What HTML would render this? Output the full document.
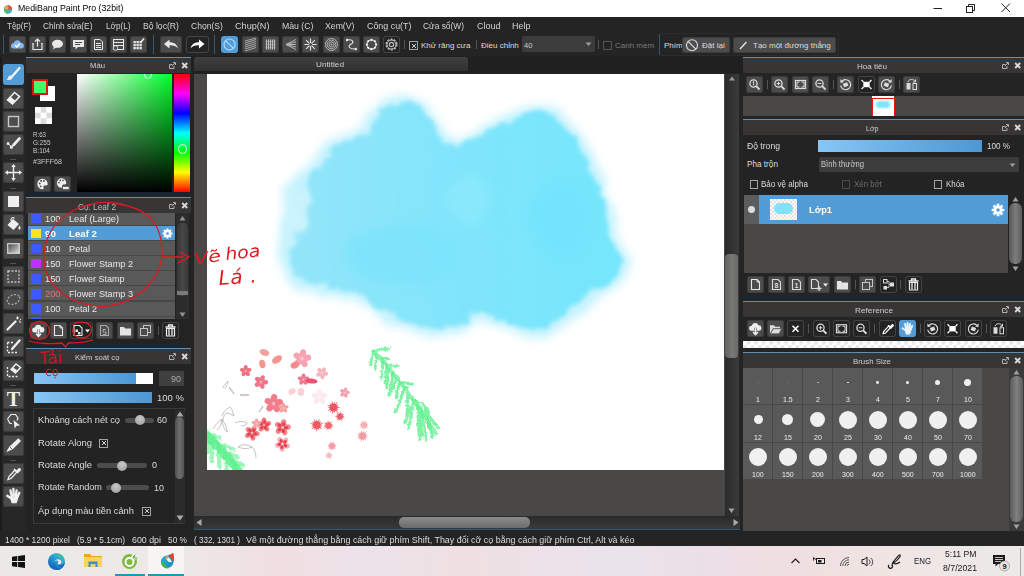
<!DOCTYPE html>
<html><head><meta charset="utf-8"><title>MediBang Paint Pro</title>
<style>
*{box-sizing:border-box;margin:0;padding:0}
html,body{width:1024px;height:576px;overflow:hidden;background:#242424;font-family:"Liberation Sans","DejaVu Sans",sans-serif;}
.a{position:absolute}
.t{position:absolute;white-space:nowrap;color:#ddd;font-size:8px;line-height:12px;transform-origin:0 50%}
.b{position:absolute;background:#4c4c4c;border-radius:3px;box-shadow:inset 0 0 0 1px #3c3c3c}
.b.dk{background:#232323;box-shadow:inset 0 0 0 1px #444}
.b.on{background:#529dd8;box-shadow:none}
.b svg,.tl svg{position:absolute;left:0;top:0;width:100%;height:100%;overflow:visible}
.tl{position:absolute;left:3px;width:21px;height:21px;background:#4c4c4c;border-radius:3px;box-shadow:inset 0 0 0 1px #3a3a3a}
.tl.on{background:#529dd8;box-shadow:none}
.sep{position:absolute;width:1px;height:9px;background:#555}
.pl{position:absolute;height:1px;background:#5f8fb2}
.ph{position:absolute;height:15px;background:#383535}
.cb{position:absolute;width:9px;height:9px;border:1px solid #a4a4a4}
.cb.x:before{content:"";position:absolute;left:1.500px;top:1.500px;width:4px;height:4px;background:linear-gradient(45deg,transparent 40%,#d4d4d4 40%,#d4d4d4 60%,transparent 60%),linear-gradient(-45deg,transparent 40%,#d4d4d4 40%,#d4d4d4 60%,transparent 60%)}
.trk{position:absolute;height:5px;border-radius:3px;background:#4c4c4c}
.knb{position:absolute;width:10px;height:10px;border-radius:5px;background:radial-gradient(circle at 50% 35%,#c8c8c8,#9a9a9a)}
.sl{position:absolute;background:linear-gradient(90deg,#86c6f4,#4c97d4)}
.cell{position:absolute;width:29px;height:36px;background:#595959}
.dot{position:absolute;background:#f0f0f0;border-radius:50%}
.row{position:absolute;left:28px;width:147px;height:14px;background:#595959}
</style></head><body>
<div class="a" style="left:0;top:0;width:1024px;height:17px;background:#fff"></div>
<svg class="a" style="left:3px;top:4px" width="10" height="10" viewBox="0 0 10 10"><circle cx="5" cy="5.5" r="4.2" fill="#3bb0c8"/><path d="M1 5.5a4 4 0 0 0 4 4.2V5.5z" fill="#4fbf5a"/><path d="M5 1.3a4.2 4.2 0 0 1 4.2 4.2H5z" fill="#e8503a"/><circle cx="3.5" cy="3.5" r="2" fill="#f2a33a"/></svg>
<span class="t " style="left:18px;top:2.1px;font-size:9.6px;color:#000;transform:scaleX(0.915);">MediBang Paint Pro (32bit)</span>
<svg class="a" style="left:900px;top:0" width="124" height="17" viewBox="0 0 124 17"><path d="M33.500 8.500h8.500" stroke="#222" stroke-width="1" fill="none"/><rect x="66.500" y="6.500" width="6" height="6" stroke="#222" fill="none"/><path d="M68.500 6.500v-2h6v6h-2" stroke="#222" fill="none"/><path d="M101.500 3.500l8.500 8.500M110 3.500l-8.500 8.500" stroke="#222" stroke-width="1" fill="none"/></svg>
<div class="a" style="left:0;top:17px;width:1024px;height:16px;background:#242424"></div>
<span class="t " style="left:6.5px;top:19.9px;font-size:9.2px;color:#d4d4d4;transform:scaleX(0.870);">Tệp(F)</span>
<span class="t " style="left:43px;top:19.9px;font-size:9.2px;color:#d4d4d4;transform:scaleX(0.904);">Chỉnh sửa(E)</span>
<span class="t " style="left:105.5px;top:19.9px;font-size:9.2px;color:#d4d4d4;transform:scaleX(0.891);">Lớp(L)</span>
<span class="t " style="left:142.5px;top:19.9px;font-size:9.2px;color:#d4d4d4;transform:scaleX(0.939);">Bộ lọc(R)</span>
<span class="t " style="left:190.5px;top:19.9px;font-size:9.2px;color:#d4d4d4;transform:scaleX(0.934);">Chọn(S)</span>
<span class="t " style="left:234.5px;top:19.9px;font-size:9.2px;color:#d4d4d4;transform:scaleX(0.992);">Chụp(N)</span>
<span class="t " style="left:281.5px;top:19.9px;font-size:9.2px;color:#d4d4d4;transform:scaleX(0.948);">Màu (C)</span>
<span class="t " style="left:325px;top:19.9px;font-size:9.2px;color:#d4d4d4;transform:scaleX(0.946);">Xem(V)</span>
<span class="t " style="left:366.5px;top:19.9px;font-size:9.2px;color:#d4d4d4;transform:scaleX(0.967);">Công cụ(T)</span>
<span class="t " style="left:423px;top:19.9px;font-size:9.2px;color:#d4d4d4;transform:scaleX(0.911);">Cửa sổ(W)</span>
<span class="t " style="left:476.5px;top:19.9px;font-size:9.2px;color:#d4d4d4;transform:scaleX(0.978);">Cloud</span>
<span class="t " style="left:512px;top:19.9px;font-size:9.2px;color:#d4d4d4;transform:scaleX(0.978);">Help</span>
<div class="a" style="left:0;top:33px;width:1024px;height:24px;background:#242424"></div>
<div class="a" style="left:3px;top:35px;width:1px;height:19px;background:#2f5a7a"></div>
<div class="b " style="left:9px;top:36px;width:17px;height:17px"><svg viewBox="0 0 17 17"><path d="M4.5 12.5a2.7 2.7 0 0 1 .3-5.4a3.6 3.6 0 0 1 6.9-.4a2.9 2.9 0 0 1 .6 5.8z" fill="#86b6f2"/><path d="M6 9.2l1.8 1.8l3.2-3.4" stroke="#fff" stroke-width="1.5" fill="none"/></svg></div>
<div class="b " style="left:29px;top:36px;width:17px;height:17px"><svg viewBox="0 0 17 17"><path d="M5 7.5h-1v6h9v-6h-1" stroke="#e8e8e8" fill="none" stroke-width="1.2"/><path d="M8.5 10.5v-7M6 5.5l2.5-2.5l2.5 2.5" stroke="#e8e8e8" fill="none" stroke-width="1.2"/></svg></div>
<div class="b " style="left:49px;top:36px;width:17px;height:17px"><svg viewBox="0 0 17 17"><ellipse cx="8.5" cy="7.8" rx="5.5" ry="4" fill="#e8e8e8"/><path d="M5 10l-1 3.5l4-2.5z" fill="#e8e8e8"/></svg></div>
<div class="b " style="left:70px;top:36px;width:17px;height:17px"><svg viewBox="0 0 17 17"><path d="M3 4h11v7h-6l-2.5 2.5v-2.5h-2.500z" fill="#e8e8e8"/><path d="M5 6.500h7M5 8.500h5" stroke="#4b4b4b" stroke-width="1"/></svg></div>
<div class="b " style="left:90px;top:36px;width:17px;height:17px"><svg viewBox="0 0 17 17"><path d="M4.500 3.500h5.500l2.500 2.500v7.500h-8z" stroke="#e8e8e8" fill="none"/><path d="M6 7.500h5M6 9.500h5M6 11.500h5" stroke="#e8e8e8" stroke-width="1"/></svg></div>
<div class="b " style="left:110px;top:36px;width:17px;height:17px"><svg viewBox="0 0 17 17"><rect x="3.500" y="3.500" width="10" height="10" stroke="#e8e8e8" fill="none"/><path d="M3.500 6.500h10M3.500 9.500h10" stroke="#e8e8e8"/><circle cx="5.500" cy="12" r="2.300" fill="#4b4b4b" stroke="#e8e8e8" stroke-width=".8"/></svg></div>
<div class="b " style="left:130px;top:36px;width:17px;height:17px"><svg viewBox="0 0 17 17"><g fill="#e8e8e8"><rect x="3.500" y="5" width="2.300" height="2.300"/><rect x="6.500" y="5" width="2.300" height="2.300"/><rect x="9.500" y="5" width="2.300" height="2.300"/><rect x="3.500" y="8" width="2.300" height="2.300"/><rect x="6.500" y="8" width="2.300" height="2.300"/><rect x="9.500" y="8" width="2.300" height="2.300"/><rect x="3.500" y="11" width="2.300" height="2.300"/><rect x="6.500" y="11" width="2.300" height="2.300"/><rect x="9.500" y="11" width="2.300" height="2.300"/></g><path d="M10.500 6.500l3.500-4" stroke="#e8e8e8" stroke-width="1.600"/></svg></div>
<div class="a" style="left:153px;top:35px;width:1px;height:19px;background:#2f5a7a"></div>
<div class="b " style="left:160px;top:36px;width:22px;height:17px"><svg viewBox="0 0 22 17"><path d="M4 8l5.500-4.500v2.800c4.500 0 7.500 2 8.500 6.200c-2-2.600-4.500-3.300-8.500-3.200v3.200z" fill="#e8e8e8"/></svg></div>
<div class="b dk" style="left:186px;top:36px;width:23px;height:17px"><svg viewBox="0 0 22 17"><path d="M18 8l-5.500-4.500v2.800c-4.500 0-7.500 2-8.500 6.200c2-2.600 4.500-3.300 8.500-3.200v3.200z" fill="#fff"/></svg></div>
<div class="a" style="left:214px;top:35px;width:1px;height:19px;background:#2f5a7a"></div>
<div class="b on" style="left:221px;top:36px;width:17px;height:17px"><svg viewBox="0 0 17 17"><circle cx="8.500" cy="8.500" r="5.500" stroke="#b4dbfb" stroke-width="1.200" fill="none"/><path d="M4.800 4.800l7.400 7.400" stroke="#b4dbfb" stroke-width="1.200"/></svg></div>
<div class="b " style="left:241.5px;top:36px;width:17px;height:17px"><svg viewBox="0 0 17 17"><path d="M3 7l11-3.500M3 9l11-3.500M3 11l11-3.500M3 13l11-3.500M3 15l11-3.500M3 5l11-3" stroke="#bdbdbd" stroke-width=".8"/></svg></div>
<div class="b " style="left:262px;top:36px;width:17px;height:17px"><svg viewBox="0 0 17 17"><path d="M4.500 3.500v10M6.500 3.500v10M8.500 3.500v10M10.500 3.500v10M12.500 3.500v10" stroke="#bdbdbd" stroke-width="1.200"/><path d="M3.500 5.500h10M3.500 8.500h10M3.500 11.500h10" stroke="#bdbdbd" stroke-width=".35"/></svg></div>
<div class="b " style="left:282px;top:36px;width:17px;height:17px"><svg viewBox="0 0 17 17"><path d="M14 3.500l-10 5l10 5M14 6l-10 2.500l10 2.500M4 8.500h10" stroke="#bdbdbd" stroke-width=".9" fill="none"/></svg></div>
<div class="b " style="left:302px;top:36px;width:17px;height:17px"><svg viewBox="0 0 17 17"><path d="M8.500 2.500v12M2.500 8.500h12M4.200 4.200l8.600 8.600M12.800 4.200l-8.600 8.600" stroke="#e8e8e8" stroke-width="1.100"/><circle cx="8.500" cy="8.500" r="1.600" fill="#4b4b4b"/></svg></div>
<div class="b " style="left:322.5px;top:36px;width:17px;height:17px"><svg viewBox="0 0 17 17"><circle cx="8.500" cy="8.500" r="6" stroke="#bdbdbd" fill="none" stroke-width=".9"/><circle cx="8.500" cy="8.500" r="4.300" stroke="#bdbdbd" fill="none" stroke-width=".9"/><circle cx="8.500" cy="8.500" r="2.600" stroke="#bdbdbd" fill="none" stroke-width=".9"/><circle cx="8.500" cy="8.500" r="1" fill="#bdbdbd"/></svg></div>
<div class="b " style="left:343px;top:36px;width:17px;height:17px"><svg viewBox="0 0 17 17"><path d="M4 4c7-1 7 3 3.500 4.500c-3 1.500-1 5 5 4.500" stroke="#e8e8e8" fill="none" stroke-width="1.100"/><circle cx="4" cy="4" r="1.200" fill="#e8e8e8"/><circle cx="12.800" cy="13" r="1.200" fill="#e8e8e8"/></svg></div>
<div class="b " style="left:363px;top:36px;width:17px;height:17px"><svg viewBox="0 0 17 17"><circle cx="8.500" cy="8.500" r="4.600" stroke="#d8d8d8" fill="none" stroke-width="1.100"/><circle cx="13.10" cy="8.50" r="1.050" fill="#fff"/><circle cx="11.75" cy="11.75" r="1.050" fill="#fff"/><circle cx="8.50" cy="13.10" r="1.050" fill="#fff"/><circle cx="5.25" cy="11.75" r="1.050" fill="#fff"/><circle cx="3.90" cy="8.50" r="1.050" fill="#fff"/><circle cx="5.25" cy="5.25" r="1.050" fill="#fff"/><circle cx="8.50" cy="3.90" r="1.050" fill="#fff"/><circle cx="11.75" cy="5.25" r="1.050" fill="#fff"/></svg></div>
<div class="b dk" style="left:383px;top:36px;width:17px;height:17px"><svg viewBox="0 0 17 17"><circle cx="8.500" cy="8.500" r="5.300" stroke="#bdbdbd" fill="none" stroke-width="1.500" stroke-dasharray="2.100 1.230"/><circle cx="8.500" cy="8.500" r="4.400" stroke="#bdbdbd" fill="none" stroke-width="1"/><circle cx="8.500" cy="8.500" r="2.100" stroke="#bdbdbd" fill="none" stroke-width="1.200"/></svg></div>
<div class="sep" style="left:404px;top:40px"></div>
<div class="cb x" style="left:409px;top:41px"></div>
<span class="t " style="left:421px;top:39.6px;font-size:8px;color:#ddd;">Khử răng cưa</span>
<div class="sep" style="left:476px;top:40px"></div>
<span class="t " style="left:481px;top:39.6px;font-size:8px;color:#ddd;">Điều chỉnh</span>
<div class="a" style="left:522px;top:36px;width:73px;height:16px;background:#3c3c3c;border-radius:2px"></div>
<span class="t " style="left:524px;top:39.6px;font-size:7.5px;color:#ccc;">40</span>
<svg class="a" style="left:585px;top:42px" width="7" height="5"><path d="M.5 .5h6l-3 3.500z" fill="#999"/></svg>
<div class="sep" style="left:598px;top:40px"></div>
<div class="cb" style="left:603px;top:41px;border-color:#555"></div>
<span class="t " style="left:615px;top:39.6px;font-size:8px;color:#7a7a7a;">Canh mềm</span>
<div class="a" style="left:659px;top:34px;width:1px;height:21px;background:#2f5a7a"></div>
<div class="a" style="left:660px;top:33px;width:179px;height:23px;border:1px solid #2c2c2c;border-left:0"></div>
<span class="t " style="left:664px;top:39.6px;font-size:8px;color:#ddd;">Phím</span>
<div class="b " style="left:682px;top:36.5px;width:48px;height:16.5px"><svg viewBox="0 0 48 16.500"><circle cx="10" cy="8.300" r="5.500" stroke="#e0e0e0" stroke-width="1.100" fill="none"/><path d="M6.200 4.500l7.600 7.600" stroke="#e0e0e0" stroke-width="1.100"/></svg></div>
<span class="t " style="left:702px;top:39.6px;font-size:8px;color:#ddd;">Đặt lại</span>
<div class="b " style="left:733px;top:36.5px;width:103px;height:16.5px"><svg viewBox="0 0 103 16.500"><path d="M7 12l6.500-7" stroke="#e8e8e8" stroke-width="1.300"/></svg></div>
<span class="t " style="left:753px;top:39.6px;font-size:8px;color:#ddd;">Tạo một đường thẳng</span>
<div class="a" style="left:0;top:57px;width:26px;height:474px;background:#272727"></div>
<div class="a" style="left:0;top:57px;width:2px;height:474px;background:#1c1c1c"></div>
<div class="tl on" style="top:64.3px"><svg viewBox="0 0 21 21"><path d="M16.500 4l-7.500 8.500" stroke="#f4f8fc" stroke-width="2.200" stroke-linecap="round"/><path d="M8.800 11.800c-2-1-3.500 0-3.800 2c-.2 1.200-.8 1.600-1.600 1.900c2.500 1 5.600.2 6.200-2.200z" fill="#e4eef8"/></svg></div>
<div class="tl " style="top:87.8px"><svg viewBox="0 0 21 21"><path d="M4.500 12l7-7.500l5 4l-7 7.500z" fill="none" stroke="#f0f0f0" stroke-width="1.600"/><path d="M4.500 12l3-3.200l5 4l-3 3.200z" fill="#f0f0f0"/></svg></div>
<div class="tl " style="top:111.3px"><svg viewBox="0 0 21 21"><rect x="5.500" y="5.500" width="10" height="10" fill="none" stroke="#c8c8c8" stroke-width="1.400"/></svg></div>
<div class="tl " style="top:134.3px"><svg viewBox="0 0 21 21"><path d="M16.500 4.500l-6 6.500" stroke="#f0f0f0" stroke-width="2.600" stroke-linecap="round"/><path d="M5 9.500l3.200 3l2-1.500" stroke="#f0f0f0" stroke-width="1" fill="none"/><rect x="3.800" y="8.300" width="2.500" height="2.500" fill="#f0f0f0"/><rect x="7" y="11.800" width="2.800" height="2.800" fill="#f0f0f0"/></svg></div>
<div class="tl " style="top:162.3px"><svg viewBox="0 0 21 21"><path d="M10.500 3.500v14M3.500 10.500h14" stroke="#f0f0f0" stroke-width="1.400"/><path d="M10.500 2l2.300 3h-4.600zM10.500 19l2.300-3h-4.600zM2 10.500l3-2.300v4.600zM19 10.500l-3-2.300v4.600z" fill="#f0f0f0"/></svg></div>
<div class="tl " style="top:191.3px"><svg viewBox="0 0 21 21"><rect x="5" y="5" width="11" height="11" fill="#f0f0f0"/></svg></div>
<div class="tl " style="top:214.3px"><svg viewBox="0 0 21 21"><path d="M4.500 11l5.500-6l6 5l-5.500 6z" fill="#f0f0f0"/><path d="M8 7c-.5-3 2-4.500 3.500-2.500" stroke="#f0f0f0" fill="none" stroke-width="1.200"/><path d="M16.500 11.500c1.500 2 1.500 3.600 0 4.200c-1.500-.6-1.500-2.200 0-4.200z" fill="#f0f0f0"/></svg></div>
<div class="tl " style="top:238.3px"><svg viewBox="0 0 21 21"><defs><linearGradient id="tg" x1="0" y1="0" x2="1" y2="1"><stop offset="0" stop-color="#444"/><stop offset="1" stop-color="#ddd"/></linearGradient></defs><rect x="4.700" y="5.700" width="11.600" height="9.600" fill="url(#tg)" stroke="#d8d8d8" stroke-width="1.200"/></svg></div>
<div class="tl " style="top:266.3px"><svg viewBox="0 0 21 21"><rect x="5" y="5" width="11" height="11" fill="none" stroke="#c4c4c4" stroke-width="1.300" stroke-dasharray="2 1.500"/></svg></div>
<div class="tl " style="top:289.3px"><svg viewBox="0 0 21 21"><ellipse cx="10.500" cy="10.500" rx="6.500" ry="4.500" transform="rotate(-25 10.500 10.500)" fill="none" stroke="#a8a8a8" stroke-width="1.300" stroke-dasharray="2 1.500"/></svg></div>
<div class="tl " style="top:313.3px"><svg viewBox="0 0 21 21"><path d="M4.500 16.500l8-8" stroke="#f0f0f0" stroke-width="2.200" stroke-linecap="round"/><path d="M14.500 3.500v3M13 5h3M16.500 7.500l1.500-1.500M16 9h2" stroke="#f0f0f0" stroke-width="1"/></svg></div>
<div class="tl " style="top:336.3px"><svg viewBox="0 0 21 21"><path d="M4.500 6.500v10h10" fill="none" stroke="#f0f0f0" stroke-width="1.300" stroke-dasharray="2 1.500"/><path d="M4.500 6.500h6" fill="none" stroke="#f0f0f0" stroke-width="1.300" stroke-dasharray="2 1.500"/><path d="M16.500 4.500l-7 8" stroke="#f0f0f0" stroke-width="2.400" stroke-linecap="round"/><path d="M8 14.500l.5-2.500l2 1.500z" fill="#f0f0f0"/></svg></div>
<div class="tl " style="top:360.3px"><svg viewBox="0 0 21 21"><path d="M4.500 7v9.500h10" fill="none" stroke="#f0f0f0" stroke-width="1.300" stroke-dasharray="2 1.500"/><path d="M8 9.500l5-5.500l4.500 3.500l-5 5.500z" fill="none" stroke="#f0f0f0" stroke-width="1.400"/><path d="M8 9.500l2-2.200l4.500 3.500l-2 2.200z" fill="#f0f0f0"/></svg></div>
<div class="tl " style="top:388.3px"><svg viewBox="0 0 21 21"><text x="10.500" y="17.500" font-family="Liberation Serif,serif" font-weight="bold" font-size="20" fill="#f0f0f0" text-anchor="middle">T</text></svg></div>
<div class="tl " style="top:411.3px"><svg viewBox="0 0 21 21"><path d="M4.500 8l3.500-4.500h4.500l2.500 3.500l-1 2.500M4.500 8l2.500 4.500h2" fill="none" stroke="#f0f0f0" stroke-width="1.200"/><path d="M10.500 9l1.200 8.500l2-2.700l3.300-.3z" fill="#f0f0f0"/></svg></div>
<div class="tl " style="top:435.3px"><svg viewBox="0 0 21 21"><path d="M15.300 3.300L18 6L9.500 14.500L4.500 16.500L3.500 17.500L4 15.500L6.500 11.500Z" fill="#f0f0f0"/><path d="M7 12l2.500 2.500" stroke="#4c4c4c" stroke-width=".8"/></svg></div>
<div class="tl " style="top:463.3px"><svg viewBox="0 0 21 21"><path d="M5 16.500l1-3l6-6.500l2 2l-6 6.500z" stroke="#f0f0f0" stroke-width="1.300" fill="none"/><path d="M11 6l4 4" stroke="#f0f0f0" stroke-width="1.600"/><path d="M13 8l2.500-2.800a1.700 1.700 0 0 1 2.300 2.300l-2.800 2.500z" fill="#f0f0f0"/></svg></div>
<div class="tl " style="top:486.3px"><svg viewBox="0 0 21 21"><g stroke="#f0f0f0" stroke-width="2.300" stroke-linecap="round" fill="none"><path d="M8.300 12.500L4.300 9.800M8.600 10L7.400 4.300M10.700 9.500L10.400 3M12.800 10L13.600 4.300M14.300 11.500L16.300 6.800"/></g><path d="M7 10.500L15.300 10L14.800 14L13.600 17.300H8.600L7.800 14.500Z" fill="#f0f0f0"/></svg></div>
<div class="a" style="left:10px;top:159px;width:6px;height:1px;background:#555"></div>
<div class="a" style="left:10px;top:187.5px;width:6px;height:1px;background:#555"></div>
<div class="a" style="left:10px;top:263px;width:6px;height:1px;background:#555"></div>
<div class="a" style="left:10px;top:385px;width:6px;height:1px;background:#555"></div>
<div class="a" style="left:10px;top:460px;width:6px;height:1px;background:#555"></div>
<div class="a" style="left:26px;top:57px;width:165px;height:140px;background:#232323"></div>
<div class="pl" style="left:26px;top:57px;width:165px"></div>
<div class="ph" style="left:26px;top:58px;width:165px"></div>
<svg class="a" style="left:165.5px;top:60.3px" width="24" height="11" viewBox="0 0 24 11"><path d="M6.500 4.500h-3v4h4.500v-2.500" stroke="#bdbdbd" fill="none" stroke-width=".9"/><path d="M5.800 6.200l3.200-3.200M7 2.500h2.500v2.500" stroke="#bdbdbd" fill="none" stroke-width=".9"/><path d="M16.200 3l5 5M21.200 3l-5 5" stroke="#d8d8d8" stroke-width="1.900"/></svg>
<span class="t " style="left:90px;top:60.1px;font-size:8px;color:#d0d0d0;transform:scaleX(0.964);">Màu</span>
<div class="a" style="left:40px;top:86px;width:15px;height:15px;background:#fff"></div>
<div class="a" style="left:32px;top:78.500px;width:16px;height:16px;background:#3fff68;border:2px solid #d9150f"></div>
<div class="a" style="left:35px;top:107px;width:17px;height:17px;background:repeating-conic-gradient(#dcdcdc 0 25%,#fff 0 50%) 0 0/11.340px 11.340px"></div>
<span class="t " style="left:33px;top:128.6px;font-size:7.3px;color:#c8c8c8;transform:scaleX(0.843);">R:63</span>
<span class="t " style="left:33px;top:136.6px;font-size:7.3px;color:#c8c8c8;transform:scaleX(0.880);">G:255</span>
<span class="t " style="left:33px;top:144.6px;font-size:7.3px;color:#c8c8c8;transform:scaleX(0.891);">B:104</span>
<span class="t " style="left:33px;top:155.6px;font-size:7.3px;color:#c8c8c8;transform:scaleX(0.979);">#3FFF68</span>
<div class="b " style="left:34px;top:176px;width:17px;height:16px"><svg viewBox="0 0 17 17"><path d="M8.500 3a5.500 5.500 0 1 0 0 11c1.500 0 1.500-1.200 1-2c-.6-1 .2-2 1.500-2h1.500c1 0 1.500-.7 1.500-1.500a5.500 5.500 0 0 0-5.500-5.500z" fill="#eee"/><circle cx="5.500" cy="8" r="1" fill="#4b4b4b"/><circle cx="7" cy="5.300" r="1" fill="#4b4b4b"/><circle cx="10" cy="5.300" r="1" fill="#4b4b4b"/><circle cx="6.500" cy="11" r="1" fill="#4b4b4b"/></svg></div>
<div class="b " style="left:54px;top:176px;width:17px;height:16px"><svg viewBox="0 0 17 17"><path d="M7.500 2.500a5 5 0 1 0 0 10c1.300 0 1.300-1 .8-1.800c-.5-1 .2-1.800 1.300-1.800h1.400c.9 0 1.500-.6 1.500-1.400a5 5 0 0 0-5-5z" fill="#eee"/><circle cx="4.800" cy="7" r=".9" fill="#4b4b4b"/><circle cx="6.200" cy="4.600" r=".9" fill="#4b4b4b"/><circle cx="9" cy="4.600" r=".9" fill="#4b4b4b"/><rect x="8.500" y="11" width="7" height="3.500" fill="#eee" stroke="#4b4b4b" stroke-width=".8"/></svg></div>
<div class="a" style="left:77px;top:74px;width:95px;height:118px;background:linear-gradient(to bottom,rgba(0,0,0,0),#000),linear-gradient(to right,#fff,#00ff2a)"></div>
<div class="a" style="left:144px;top:70.500px;width:8px;height:8px;border:1.800px solid #f4fff6;border-radius:50%;clip-path:inset(3.500px 0 0 0)"></div>
<div class="a" style="left:174px;top:74px;width:16px;height:118px;background:linear-gradient(to bottom,#ff0000 0%,#ff00ff 16.600%,#0000ff 33.300%,#00ffff 50%,#00ff00 66.600%,#ffff00 83.300%,#ff0000 100%)"></div>
<div class="a" style="left:177.500px;top:144px;width:9.500px;height:9.500px;border:1.900px solid #eafff0;border-radius:50%"></div>
<div class="a" style="left:26px;top:197px;width:165px;height:150px;background:#232323"></div>
<div class="pl" style="left:26px;top:197px;width:165px"></div>
<div class="ph" style="left:26px;top:198px;width:165px"></div>
<svg class="a" style="left:165.5px;top:200.3px" width="24" height="11" viewBox="0 0 24 11"><path d="M6.500 4.500h-3v4h4.500v-2.500" stroke="#bdbdbd" fill="none" stroke-width=".9"/><path d="M5.800 6.200l3.200-3.200M7 2.500h2.500v2.500" stroke="#bdbdbd" fill="none" stroke-width=".9"/><path d="M16.200 3l5 5M21.200 3l-5 5" stroke="#d8d8d8" stroke-width="1.900"/></svg>
<span class="t " style="left:78px;top:200.6px;font-size:8.3px;color:#bdbdbd;transform:scaleX(0.992);">Cọ: Leaf 2</span>
<div class="a" style="left:28px;top:213px;width:147px;height:106px;background:#474747;overflow:hidden"></div>
<div class="a" style="left:28px;top:213px;width:147px;height:12.25px;background:#595959"></div>
<div class="a" style="left:31px;top:213.8px;width:9.500px;height:9.500px;background:#3c5bff"></div>
<span class="t " style="left:44.5px;top:213.1px;font-size:8.6px;color:#e8e8e8;transform:scaleX(1.080);">100</span>
<span class="t " style="left:68.5px;top:213.1px;font-size:8.6px;color:#e8e8e8;transform:scaleX(1.067);">Leaf (Large)</span>
<div class="a" style="left:28px;top:226.25px;width:147px;height:14.05px;background:#529dd8"></div>
<div class="a" style="left:31px;top:228.85px;width:9.500px;height:9.500px;background:#ffe21f"></div>
<span class="t " style="left:44.5px;top:228.15px;font-size:8.6px;color:#fff;transform:scaleX(1.150);font-weight:bold;">90</span>
<span class="t " style="left:68.5px;top:228.15px;font-size:8.6px;color:#fff;transform:scaleX(1.126);font-weight:bold;">Leaf 2</span>
<svg class="a" style="left:161.500px;top:228.05px" width="11" height="11" viewBox="0 0 12 12"><g stroke="#fff" stroke-width="2.300"><path d="M6 .6v10.800M.6 6h10.800M2.200 2.200l7.600 7.600M9.800 2.200l-7.600 7.600"/></g><circle cx="6" cy="6" r="3.700" fill="#fff"/><circle cx="6" cy="6" r="1.500" fill="#529dd8"/></svg>
<div class="a" style="left:28px;top:241.3px;width:147px;height:14.05px;background:#595959"></div>
<div class="a" style="left:31px;top:243.9px;width:9.500px;height:9.500px;background:#3c5bff"></div>
<span class="t " style="left:44.5px;top:243.2px;font-size:8.6px;color:#e8e8e8;transform:scaleX(1.080);">100</span>
<span class="t " style="left:68.5px;top:243.2px;font-size:8.6px;color:#e8e8e8;transform:scaleX(1.071);">Petal</span>
<div class="a" style="left:28px;top:256.35px;width:147px;height:14.05px;background:#595959"></div>
<div class="a" style="left:31px;top:258.95px;width:9.500px;height:9.500px;background:#c22cff"></div>
<span class="t " style="left:44.5px;top:258.25px;font-size:8.6px;color:#e8e8e8;transform:scaleX(1.080);">150</span>
<span class="t " style="left:68.5px;top:258.25px;font-size:8.6px;color:#e8e8e8;transform:scaleX(1.063);">Flower Stamp 2</span>
<div class="a" style="left:28px;top:271.4px;width:147px;height:14.05px;background:#595959"></div>
<div class="a" style="left:31px;top:274px;width:9.500px;height:9.500px;background:#3c5bff"></div>
<span class="t " style="left:44.5px;top:273.3px;font-size:8.6px;color:#e8e8e8;transform:scaleX(1.080);">150</span>
<span class="t " style="left:68.5px;top:273.3px;font-size:8.6px;color:#e8e8e8;transform:scaleX(1.046);">Flower Stamp</span>
<div class="a" style="left:28px;top:286.45px;width:147px;height:14.05px;background:#595959"></div>
<div class="a" style="left:31px;top:289.05px;width:9.500px;height:9.500px;background:#3c5bff"></div>
<span class="t " style="left:44.5px;top:288.35px;font-size:8.6px;color:#d87878;transform:scaleX(1.080);">200</span>
<span class="t " style="left:68.5px;top:288.35px;font-size:8.6px;color:#e8e8e8;transform:scaleX(1.063);">Flower Stamp 3</span>
<div class="a" style="left:28px;top:301.5px;width:147px;height:14.05px;background:#595959"></div>
<div class="a" style="left:31px;top:304.1px;width:9.500px;height:9.500px;background:#3c5bff"></div>
<span class="t " style="left:44.5px;top:303.4px;font-size:8.6px;color:#e8e8e8;transform:scaleX(1.080);">100</span>
<span class="t " style="left:68.5px;top:303.4px;font-size:8.6px;color:#e8e8e8;transform:scaleX(1.046);">Petal 2</span>
<div class="a" style="left:28px;top:316.550px;width:147px;height:2.450px;background:#595959"></div>
<div class="a" style="left:31px;top:317.200px;width:9.500px;height:1.800px;background:#3c5bff"></div>
<div class="a" style="left:176px;top:213px;width:13px;height:106px;background:#2c2c2c"></div>
<div class="a" style="left:177px;top:223px;width:11px;height:73px;background:linear-gradient(90deg,#363636,#474747 50%,#3a3a3a);border-radius:5px"></div>
<div class="a" style="left:177px;top:291px;width:11px;height:4px;background:#7a7a7a"></div>
<svg class="a" style="left:178px;top:215px" width="9" height="6"><path d="M4.500 1l3 4.500h-6z" fill="#929292"/></svg>
<svg class="a" style="left:178px;top:312px" width="9" height="6"><path d="M4.500 5l3-4.500h-6z" fill="#929292"/></svg>
<div class="b " style="left:30px;top:322px;width:17px;height:17px"><svg viewBox="0 0 17 17"><path d="M4.500 10.500a2.500 2.500 0 0 1 .3-5a3.400 3.400 0 0 1 6.600-.4a2.700 2.700 0 0 1 .6 5.400z" fill="#eee"/><path d="M8.500 8v6M6 11.800l2.500 2.700l2.500-2.700" stroke="#eee" stroke-width="1.500" fill="none"/><path d="M8.500 7.500v3" stroke="#4b4b4b" stroke-width="2.400"/><path d="M8.500 7.500v6" stroke="#eee" stroke-width="1.400"/></svg></div>
<div class="b " style="left:50px;top:322px;width:17px;height:17px"><svg viewBox="0 0 17 17"><path d="M4.500 3.500h5.500l2.500 2.500v7.500h-8z" stroke="#e8e8e8" fill="none" stroke-width="1.100"/><path d="M10 3.500v2.500h2.500" stroke="#e8e8e8" fill="none" stroke-width=".9"/></svg></div>
<div class="b dk" style="left:70px;top:322px;width:23px;height:17px"><svg viewBox="0 0 22 17"><path d="M3.500 3.500h5.500l2.500 2.500v7.500h-8z" stroke="#e8e8e8" fill="none" stroke-width="1.100"/><rect x="5" y="7.500" width="2.500" height="2.500" fill="#e8e8e8"/><rect x="7.500" y="10" width="2.500" height="2.500" fill="#e8e8e8"/><path d="M14.500 7.500h5l-2.500 3z" fill="#fff"/></svg></div>
<div class="b " style="left:96px;top:322px;width:17px;height:17px"><svg viewBox="0 0 17 17"><path d="M4.500 3.500h5.500l2.500 2.500v7.500h-8z" stroke="#aaa" fill="none" stroke-width="1.100"/><path d="M10 7.500h-3v2.500h3v2.500h-3" stroke="#aaa" fill="none" stroke-width="1"/></svg></div>
<div class="b " style="left:117px;top:322px;width:17px;height:17px"><svg viewBox="0 0 17 17"><path d="M3 5h4l1.200 1.500h5.800v7h-11z" fill="#e4e4e4"/></svg></div>
<div class="b " style="left:137px;top:322px;width:17px;height:17px"><svg viewBox="0 0 17 17"><rect x="6.500" y="3.500" width="7" height="7" stroke="#c4c4c4" fill="none"/><rect x="3.500" y="6.500" width="7" height="7" stroke="#c4c4c4" fill="#4b4b4b"/></svg></div>
<div class="sep" style="left:158px;top:326px"></div>
<div class="b dk" style="left:162px;top:322px;width:17px;height:17px"><svg viewBox="0 0 17 17"><path d="M4.500 6.500h8v7.500h-8z" stroke="#eee" fill="none" stroke-width="1.200"/><path d="M3.500 5h10M6.500 4.500v-1.500h4v1.500" stroke="#eee" fill="none" stroke-width="1.300"/><path d="M7 7v6.500M10 7v6.500" stroke="#eee" stroke-width="1.300"/></svg></div>
<div class="a" style="left:26px;top:348px;width:165px;height:183px;background:#232323"></div>
<div class="pl" style="left:26px;top:348px;width:165px"></div>
<div class="ph" style="left:26px;top:349px;width:165px"></div>
<svg class="a" style="left:165.5px;top:351.3px" width="24" height="11" viewBox="0 0 24 11"><path d="M6.500 4.500h-3v4h4.500v-2.500" stroke="#bdbdbd" fill="none" stroke-width=".9"/><path d="M5.800 6.200l3.200-3.200M7 2.500h2.500v2.500" stroke="#bdbdbd" fill="none" stroke-width=".9"/><path d="M16.200 3l5 5M21.200 3l-5 5" stroke="#d8d8d8" stroke-width="1.900"/></svg>
<span class="t " style="left:75px;top:351.6px;font-size:8px;color:#d0d0d0;transform:scaleX(0.962);">Kiểm soát cọ</span>
<div class="a" style="left:34px;top:373px;width:119px;height:11px;background:#fff"></div>
<div class="sl" style="left:34px;top:373px;width:102px;height:11px"></div>
<div class="a" style="left:159px;top:371px;width:25px;height:15px;background:#404040"></div>
<span class="t " style="left:171px;top:373.1px;font-size:8.5px;color:#a8a8a8;transform:scaleX(1.058);">90</span>
<div class="sl" style="left:34px;top:392px;width:118px;height:11px"></div>
<span class="t " style="left:157px;top:392.1px;font-size:8.5px;color:#ddd;transform:scaleX(1.120);">100 %</span>
<div class="a" style="left:33px;top:408px;width:152px;height:116px;border:1px solid #3a3a3a"></div>
<span class="t " style="left:38px;top:413.8px;font-size:9px;color:#ddd;transform:scaleX(1.031);">Khoảng cách nét cọ</span>
<div class="trk" style="left:125px;top:417.500px;width:29px"></div><div class="knb" style="left:135px;top:415px"></div>
<span class="t " style="left:157px;top:414px;font-size:8.5px;color:#ddd;transform:scaleX(1.058);">60</span>
<span class="t " style="left:38px;top:436.6px;font-size:9px;color:#ddd;transform:scaleX(1.048);">Rotate Along</span>
<div class="cb x" style="left:99px;top:438.500px"></div>
<span class="t " style="left:38px;top:459.2px;font-size:9px;color:#ddd;transform:scaleX(1.048);">Rotate Angle</span>
<div class="trk" style="left:97px;top:463px;width:50px"></div><div class="knb" style="left:117px;top:460.500px"></div>
<span class="t " style="left:152px;top:459.4px;font-size:8.5px;color:#ddd;transform:scaleX(1.058);">0</span>
<span class="t " style="left:38px;top:481.3px;font-size:9px;color:#ddd;transform:scaleX(1.015);">Rotate Random</span>
<div class="trk" style="left:106px;top:485px;width:43px"></div><div class="knb" style="left:111px;top:482.500px"></div>
<span class="t " style="left:154px;top:481.5px;font-size:8.5px;color:#ddd;transform:scaleX(1.058);">10</span>
<span class="t " style="left:38px;top:504.6px;font-size:9px;color:#ddd;transform:scaleX(1.037);">Áp dụng màu tiền cảnh</span>
<div class="cb x" style="left:142px;top:506.500px"></div>
<div class="a" style="left:174.500px;top:410px;width:10px;height:113px;background:#2b2b2b"></div>
<div class="a" style="left:175px;top:417px;width:9px;height:62px;background:linear-gradient(90deg,#505050,#6e6e6e 50%,#545454);border-radius:4.500px"></div>
<svg class="a" style="left:175.500px;top:411px" width="8" height="6"><path d="M4 .5l3.500 5h-7z" fill="#aaa"/></svg>
<svg class="a" style="left:175.500px;top:515px" width="8" height="6"><path d="M4 5.500l3.500-5h-7z" fill="#aaa"/></svg>
<div class="a" style="left:191px;top:57px;width:552px;height:474px;background:#242424"></div>
<div class="a" style="left:191px;top:56px;width:552px;height:17.400px;background:#202020"></div>
<div class="a" style="left:194px;top:56.500px;width:274px;height:14.700px;background:linear-gradient(#404040,#303030);border-radius:3px 3px 0 0"></div>
<span class="t " style="left:316px;top:58.9px;font-size:8px;color:#cfcfcf;transform:scaleX(1.032);">Untitled</span>
<div class="a" style="left:194px;top:73.600px;width:531px;height:442.400px;background:#4a4847"></div>
<div class="a" style="left:207px;top:73.600px;width:517px;height:396.400px;background:#fff;overflow:hidden">
<svg width="517" height="397" viewBox="207 73 517 397" style="position:absolute;left:0;top:-.6px">
<defs>
<filter id="wc" x="-20%" y="-20%" width="140%" height="140%"><feTurbulence type="fractalNoise" baseFrequency="0.06" numOctaves="4" seed="4" result="n"/><feDisplacementMap in="SourceGraphic" in2="n" scale="14" xChannelSelector="R" yChannelSelector="G" result="d"/><feGaussianBlur in="d" stdDeviation="2.200"/></filter>
<filter id="wc2" x="-20%" y="-20%" width="140%" height="140%"><feTurbulence type="fractalNoise" baseFrequency="0.05" numOctaves="2" seed="9" result="n"/><feDisplacementMap in="SourceGraphic" in2="n" scale="14" xChannelSelector="R" yChannelSelector="G" result="d"/><feGaussianBlur in="d" stdDeviation="5"/></filter>
<filter id="fb" x="-30%" y="-30%" width="160%" height="160%"><feGaussianBlur stdDeviation="0.650"/></filter>
<filter id="fb2" x="-30%" y="-30%" width="160%" height="160%"><feGaussianBlur stdDeviation="0.550"/></filter>
<filter id="lf" x="-20%" y="-20%" width="140%" height="140%"><feTurbulence type="fractalNoise" baseFrequency="0.3" numOctaves="2" seed="3" result="n"/><feDisplacementMap in="SourceGraphic" in2="n" scale="4" xChannelSelector="R" yChannelSelector="G" result="d"/><feGaussianBlur in="d" stdDeviation="0.750"/></filter>
<g id="fl"><ellipse cx="0" cy="-3.200" rx="2.100" ry="3"/><ellipse cx="0" cy="-3.200" rx="2.100" ry="3" transform="rotate(72)"/><ellipse cx="0" cy="-3.200" rx="2.100" ry="3" transform="rotate(144)"/><ellipse cx="0" cy="-3.200" rx="2.100" ry="3" transform="rotate(216)"/><ellipse cx="0" cy="-3.200" rx="2.100" ry="3" transform="rotate(288)"/><circle r="1.300" fill="#fff" opacity=".35"/></g>
<g id="fr"><use href="#fl"/><g transform="scale(.62) rotate(8)" fill="#e5424f"><ellipse cx="0" cy="-4.200" rx="2" ry="2.600"/><ellipse cx="0" cy="-4.200" rx="2" ry="2.600" transform="rotate(72)"/><ellipse cx="0" cy="-4.200" rx="2" ry="2.600" transform="rotate(144)"/><ellipse cx="0" cy="-4.200" rx="2" ry="2.600" transform="rotate(216)"/><ellipse cx="0" cy="-4.200" rx="2" ry="2.600" transform="rotate(288)"/></g></g>
<g id="sp"><path d="M0.00 -4.60L0.58 -2.53L2.43 -5.05L1.62 -2.03L3.60 -2.87L2.34 -1.13L5.46 -1.25L2.60 -0.00L4.48 1.02L2.34 1.13L4.38 3.49L1.62 2.03L2.00 4.14L0.58 2.53L0.00 5.60L-0.58 2.53L-2.00 4.14L-1.62 2.03L-4.38 3.49L-2.34 1.13L-4.48 1.02L-2.60 0.00L-5.46 -1.25L-2.34 -1.13L-3.60 -2.87L-1.62 -2.03L-2.43 -5.05L-0.58 -2.53Z"/><circle r="2.600"/></g>
</defs>
<!-- cloud -->
<g filter="url(#wc2)" opacity=".6"><path d="M405.0 96.0C411.0 97.0 418.5 99.2 424.0 104.0C429.5 108.8 433.7 119.3 438.0 125.0C442.3 130.7 445.3 136.0 450.0 138.0C454.7 140.0 459.7 139.2 466.0 137.0C472.3 134.8 480.3 129.2 488.0 125.0C495.7 120.8 501.3 114.8 512.0 112.0C522.7 109.2 541.0 105.0 552.0 108.0C563.0 111.0 570.7 121.0 578.0 130.0C585.3 139.0 590.3 150.0 596.0 162.0C601.7 174.0 608.7 190.2 612.0 202.0C615.3 213.8 613.0 223.5 616.0 233.0C619.0 242.5 629.0 250.7 630.0 259.0C631.0 267.3 627.7 276.0 622.0 283.0C616.3 290.0 604.7 294.3 596.0 301.0C587.3 307.7 579.0 316.8 570.0 323.0C561.0 329.2 552.3 336.8 542.0 338.0C531.7 339.2 518.3 332.8 508.0 330.0C497.7 327.2 488.3 320.5 480.0 321.0C471.7 321.5 469.0 331.2 458.0 333.0C447.0 334.8 427.3 334.7 414.0 332.0C400.7 329.3 388.0 322.3 378.0 317.0C368.0 311.7 362.7 303.7 354.0 300.0C345.3 296.3 335.7 296.8 326.0 295.0C316.3 293.2 303.7 294.3 296.0 289.0C288.3 283.7 282.5 273.5 280.0 263.0C277.5 252.5 280.0 238.0 281.0 226.0C282.0 214.0 282.8 200.2 286.0 191.0C289.2 181.8 295.3 176.8 300.0 171.0C304.7 165.2 309.3 160.8 314.0 156.0C318.7 151.2 320.3 146.7 328.0 142.0C335.7 137.3 352.8 133.2 360.0 128.0C367.2 122.8 366.3 116.0 371.0 111.0C375.7 106.0 382.3 100.5 388.0 98.0C393.7 95.5 399.0 95.0 405.0 96.0Z" fill="#9eeafc"/></g>
<linearGradient id="cg" x1="0" y1="0" x2="1" y2="0"><stop offset="0" stop-color="#93e5f9"/><stop offset=".55" stop-color="#7fe5fb"/><stop offset="1" stop-color="#74e6fd"/></linearGradient>
<g filter="url(#wc)"><path d="M410.0 101.0C415.5 102.0 419.8 106.0 424.0 111.0C428.2 116.0 431.0 125.5 435.0 131.0C439.0 136.5 442.8 142.0 448.0 144.0C453.2 146.0 459.0 145.2 466.0 143.0C473.0 140.8 482.2 135.0 490.0 131.0C497.8 127.0 505.5 122.0 513.0 119.0C520.5 116.0 528.3 113.7 535.0 113.0C541.7 112.3 546.8 111.7 553.0 115.0C559.2 118.3 566.2 125.2 572.0 133.0C577.8 140.8 583.3 153.0 588.0 162.0C592.7 171.0 597.2 179.5 600.0 187.0C602.8 194.5 603.5 198.8 605.0 207.0C606.5 215.2 606.3 227.3 609.0 236.0C611.7 244.7 620.0 252.0 621.0 259.0C622.0 266.0 620.2 272.3 615.0 278.0C609.8 283.7 598.3 287.0 590.0 293.0C581.7 299.0 573.3 308.0 565.0 314.0C556.7 320.0 549.5 327.8 540.0 329.0C530.5 330.2 518.0 323.7 508.0 321.0C498.0 318.3 488.5 312.3 480.0 313.0C471.5 313.7 467.8 323.2 457.0 325.0C446.2 326.8 427.5 326.5 415.0 324.0C402.5 321.5 391.5 315.3 382.0 310.0C372.5 304.7 366.7 296.0 358.0 292.0C349.3 288.0 338.8 287.8 330.0 286.0C321.2 284.2 311.3 284.8 305.0 281.0C298.7 277.2 294.0 270.0 292.0 263.0C290.0 256.0 290.7 245.7 293.0 239.0C295.3 232.3 303.2 230.2 306.0 223.0C308.8 215.8 308.8 203.8 310.0 196.0C311.2 188.2 311.3 181.7 313.0 176.0C314.7 170.3 316.8 166.5 320.0 162.0C323.2 157.5 324.5 153.5 332.0 149.0C339.5 144.5 357.5 140.3 365.0 135.0C372.5 129.7 372.7 122.0 377.0 117.0C381.3 112.0 385.5 107.7 391.0 105.0C396.5 102.3 404.5 100.0 410.0 101.0Z" fill="url(#cg)"/></g>
<g filter="url(#wc2)" opacity=".5"><ellipse cx="560" cy="220" rx="32" ry="40" fill="#6fe3fd"/><ellipse cx="400" cy="255" rx="60" ry="30" fill="#74e3fb"/><ellipse cx="470" cy="200" rx="22" ry="25" fill="#93ebfd"/><ellipse cx="297" cy="215" rx="8" ry="24" fill="#d4f5fd"/></g>
<!-- flowers -->
<g filter="url(#fb)">
<use href="#fl" transform="translate(245.700 371) scale(.95)" fill="#f0707f"/>
<use href="#fl" transform="translate(261 382) rotate(20) scale(1.150)" fill="#ef7688"/>
<use href="#fl" transform="translate(302 358.500) rotate(10) scale(1.500)" fill="#f7a3b3"/>
<ellipse cx="295" cy="365" rx="4.600" ry="3.300" transform="rotate(-25 295 365)" fill="#f38c90"/>
<use href="#fl" transform="translate(322 373) rotate(30) scale(1)" fill="#f8b4c0"/>
<use href="#fl" transform="translate(303.500 379.500) scale(.95)" fill="#f2788c"/>
<ellipse cx="311.500" cy="381" rx="6" ry="2.500" fill="#ef5070" transform="rotate(5 311.500 381)"/>
<use href="#fl" transform="translate(344.700 392.600) rotate(15) scale(.85)" fill="#f5a0ae"/>
<use href="#fl" transform="translate(273.600 403.500) rotate(5) scale(1.550)" fill="#f27c8a"/>
<use href="#fl" transform="translate(283.500 408) scale(.85)" fill="#f6a29c"/>
<use href="#fr" transform="translate(264 425) scale(1.200)" fill="#f27a82"/>
<use href="#fr" transform="translate(252 433) rotate(25) scale(1.250)" fill="#f38088"/>
<use href="#fl" transform="translate(256.500 423.500) scale(.8)" fill="#f7a4a8"/>
<use href="#fr" transform="translate(282.500 427.500) rotate(12) scale(1.350)" fill="#f38890"/>
<use href="#fr" transform="translate(282.500 444) rotate(40) scale(1.250)" fill="#f8b0b8"/>
</g>
<g filter="url(#fb2)" opacity=".9">
<use href="#sp" transform="translate(316.800 425) scale(1.31)" fill="#f04452"/>
<use href="#sp" transform="translate(328.500 425.500) rotate(20) scale(1.06)" fill="#ef5562"/>
<use href="#sp" transform="translate(333.500 407.500) rotate(10) scale(1.31)" fill="#ef4250"/>
<use href="#sp" transform="translate(340 416.500) rotate(35) scale(1.00)" fill="#ee4c5a"/>
<use href="#sp" transform="translate(364 425) scale(1.00)" fill="#f6a5ab"/>
<use href="#sp" transform="translate(362.500 436) rotate(15) scale(1.19)" fill="#f38d97"/>
<use href="#sp" transform="translate(332 446) scale(1.00)" fill="#f4929e"/>
<use href="#sp" transform="translate(329 455.500) rotate(20) scale(0.81)" fill="#f8b4b8"/>
</g>
<g filter="url(#fb)">
<use href="#fl" transform="translate(319.500 397) scale(1.300)" fill="#fcebed"/>
<ellipse cx="264.500" cy="352.500" rx="5" ry="3.200" fill="#f5a0a0" transform="rotate(20 264.500 352.500)"/>
<ellipse cx="277" cy="359.500" rx="5.500" ry="3.500" fill="#f3958f" transform="rotate(-35 277 359.500)"/>
<ellipse cx="262.300" cy="364" rx="3" ry="4.300" fill="#f3958f" transform="rotate(-10 262.300 364)"/>
<ellipse cx="292" cy="391.500" rx="3.800" ry="3" fill="#fad2d6" transform="rotate(-30 292 391.500)"/>
<ellipse cx="301" cy="392" rx="3.300" ry="4" fill="#fad2d6"/>
</g>
<!-- sketch leaves -->
<g fill="none" stroke="#9a9a9a" stroke-width=".6">
<path d="M223 388c1-3 3-5 5-7c0 3-2 6-3 8M229 387c2 2 4 4 5 7c-2-2-4-4-5-7M240 395c3-1 6-1 9 0c-3 1-6 1-9 0M259 412c1-2 2-4 4-6c0 2-2 4-4 6"/>
<path d="M222 416c1-4 4-7 8-9c2 2 3 5 4 9c-3-2-5-3-8-3c-2 2-3 5-3 8M213 429c2-4 5-7 9-10c0 4-2 8-5 11M222 420c3 3 5 7 5 12c-3-3-5-7-5-12M235 423c4-2 8-2 12 0c-1 2-3 3-6 3M238 447c4-3 9-3 14 0c-4 2-9 2-14 0M252 447c3 3 4 7 4 11"/>
</g>
<!-- green leaves -->
<g filter="url(#lf)" stroke="#5cf08c" fill="none" stroke-linecap="round">
<path d="M373.4 351.5L384.9 362.9L400.2 382.1L415.4 403.1L428.8 422.2L435.5 433.7" stroke-width="4" opacity=".7"/>
<path d="M374.3 350.5L388.7 348.6M372.4 352.4L370.5 364.9M376.3 354.3L375.3 368.7M382.9 361.0L381.0 378.2M386.8 364.9L384.9 384.0M390.6 364.9L398.2 365.8M393.5 373.5L388.7 395.4M398.2 382.1L412.6 384.0M399.2 383.0L396.3 397.4M404.0 389.7L395.4 412.7M407.8 395.4L406.8 416.5M411.6 399.3L421.2 403.1M413.5 403.1L408.8 428.0M417.4 405.0L419.3 439.4M421.2 406.9L426.0 439.4M425.0 410.7L432.7 437.5M427.9 414.6L438.4 428.0M423.1 403.1L430.7 416.5M381.0 358.2L388.7 359.1M403.0 386.8L407.8 387.8M410.7 406.9L404.9 424.1M419.3 412.7L422.1 435.6M388.7 368.7L386.8 387.8M396.3 378.2L391.5 391.6" stroke-width="2.800" opacity=".8"/>
<path d="M204 433C216 444 230 459 243 477" stroke-width="8.500" opacity=".85"/>
<path d="M207.8 431.2L207.8 452.1M207.8 433.9L220.8 437.8M211.7 437.8L211.7 461.2M214.3 441.7L233.9 449.5M218.2 446.9L219.5 467.7M222.1 450.8L237.8 457.3M224.7 456.0L227.3 469.0M228.6 458.6L243.0 465.1M232.6 462.5L236.5 470.3" stroke-width="4" opacity=".6"/>
</g>
</svg>
</div>
<div class="a" style="left:724.500px;top:73.600px;width:14.500px;height:442.400px;background:linear-gradient(90deg,#2a2a2a,#3b3b3b)"></div>
<div class="a" style="left:725.300px;top:254px;width:12.400px;height:104px;background:linear-gradient(90deg,#626261,#787876 55%,#6a6a69);border-radius:4px"></div>
<svg class="a" style="left:727.500px;top:76px" width="8" height="5"><path d="M4 .5l3 4h-6z" fill="#999"/></svg>
<svg class="a" style="left:727px;top:508px" width="9" height="6"><path d="M4.500 5l3-4.500h-6z" fill="#a0a0a0"/></svg>
<div class="a" style="left:194px;top:516px;width:546px;height:14px;background:linear-gradient(#2a2a2a,#3a3a3a);border-bottom:1px solid #2f5a7a"></div>
<div class="a" style="left:399px;top:517px;width:131px;height:11px;background:linear-gradient(#8c8c8c,#6c6c6c);border-radius:5px"></div>
<svg class="a" style="left:196px;top:518px" width="6" height="9"><path d="M.5 4.500l5-3.500v7z" fill="#aaa"/></svg>
<svg class="a" style="left:733px;top:518px" width="6" height="9"><path d="M5.500 4.500l-5-3.500v7z" fill="#aaa"/></svg>
<div class="a" style="left:743px;top:57px;width:281px;height:62px;background:#242424"></div>
<div class="pl" style="left:743px;top:57px;width:281px"></div>
<div class="ph" style="left:743px;top:58px;width:281px"></div>
<svg class="a" style="left:998.5px;top:60.3px" width="24" height="11" viewBox="0 0 24 11"><path d="M6.500 4.500h-3v4h4.500v-2.500" stroke="#bdbdbd" fill="none" stroke-width=".9"/><path d="M5.800 6.200l3.200-3.200M7 2.500h2.500v2.500" stroke="#bdbdbd" fill="none" stroke-width=".9"/><path d="M16.200 3l5 5M21.200 3l-5 5" stroke="#d8d8d8" stroke-width="1.900"/></svg>
<span class="t " style="left:857px;top:60.6px;font-size:8px;color:#d0d0d0;transform:scaleX(1.007);">Hoa tiêu</span>
<div class="b " style="left:746px;top:76px;width:17px;height:17px"><svg viewBox="0 0 17 17"><circle cx="7.500" cy="7.500" r="3.600" stroke="#dcdcdc" fill="none" stroke-width="1.300"/><path d="M10.200 10.200l3.300 3.300" stroke="#dcdcdc" stroke-width="1.800"/><path d="M7.600 5.500v4M6.800 6.300l.8-.8" stroke="#dcdcdc" stroke-width=".9"/></svg></div>
<div class="sep" style="left:767px;top:80px"></div>
<div class="b " style="left:771px;top:76px;width:17px;height:17px"><svg viewBox="0 0 17 17"><circle cx="7.500" cy="7.500" r="3.600" stroke="#dcdcdc" fill="none" stroke-width="1.300"/><path d="M10.200 10.200l3.300 3.300" stroke="#dcdcdc" stroke-width="1.800"/><path d="M5.700 7.500h3.600M7.500 5.700v3.600" stroke="#dcdcdc" stroke-width="1"/></svg></div>
<div class="b " style="left:792px;top:76px;width:17px;height:17px"><svg viewBox="0 0 17 17"><rect x="3.500" y="4.500" width="10" height="8" stroke="#dcdcdc" fill="none" stroke-width="1.200"/><path d="M5 8.500v-2.500h2.500M12 8.500v-2.500h-2.500M5 8.500v2.500h2.500M12 8.500v2.500h-2.500" stroke="#dcdcdc" fill="none" stroke-width="1"/></svg></div>
<div class="b " style="left:812px;top:76px;width:17px;height:17px"><svg viewBox="0 0 17 17"><circle cx="7.500" cy="7.500" r="3.600" stroke="#dcdcdc" fill="none" stroke-width="1.300"/><path d="M10.200 10.200l3.300 3.300" stroke="#dcdcdc" stroke-width="1.800"/><path d="M5.700 7.500h3.600" stroke="#dcdcdc" stroke-width="1"/></svg></div>
<div class="sep" style="left:833px;top:80px"></div>
<div class="b " style="left:837px;top:76px;width:17px;height:17px"><svg viewBox="0 0 17 17"><path d="M5.300 5a5 5 0 1 1-1.600 4.500" stroke="#dcdcdc" fill="none" stroke-width="1.200"/><path d="M3.200 3.300l.4 3.600l3.400-.9z" fill="#dcdcdc"/><rect x="6.300" y="6.800" width="4.600" height="3.800" transform="rotate(-20 8.600 8.700)" fill="#dcdcdc"/></svg></div>
<div class="b dk" style="left:858px;top:76px;width:17px;height:17px"><svg viewBox="0 0 17 17"><rect x="5.300" y="5.800" width="6.400" height="5.400" fill="#fff"/><path d="M3.500 4l2 2M13.500 4l-2 2M3.500 13l2-2M13.500 13l-2-2" stroke="#fff" stroke-width="1.200"/></svg></div>
<div class="b " style="left:878px;top:76px;width:17px;height:17px"><svg viewBox="0 0 17 17"><path d="M11.700 5a5 5 0 1 0 1.600 4.500" stroke="#dcdcdc" fill="none" stroke-width="1.200"/><path d="M13.800 3.300l-.4 3.600l-3.400-.9z" fill="#dcdcdc"/><rect x="6.100" y="6.800" width="4.600" height="3.800" transform="rotate(20 8.400 8.700)" fill="#dcdcdc"/></svg></div>
<div class="sep" style="left:899px;top:80px"></div>
<div class="b " style="left:903px;top:76px;width:17px;height:17px"><svg viewBox="0 0 17 17"><rect x="3.500" y="7" width="4" height="6.500" fill="#dcdcdc"/><rect x="10" y="7.500" width="3.500" height="6" fill="none" stroke="#dcdcdc" stroke-width="1"/><path d="M5 6c.5-3 6-3.500 7-.5M12.500 3.500v2.500h-2.500" stroke="#dcdcdc" fill="none" stroke-width="1"/></svg></div>
<div class="a" style="left:743px;top:95.500px;width:281px;height:20.500px;background:#4a4847;overflow:hidden"><div class="a" style="left:129px;top:.5px;width:22px;height:22px;background:#fff"></div><div class="a" style="left:129px;top:2.500px;width:22.500px;height:22px;border:1.800px solid #e8160e"></div><div class="a" style="left:133px;top:5.500px;width:13.500px;height:7px;border-radius:4px;background:#7fe3fa;filter:blur(.8px)"></div></div>
<div class="a" style="left:743px;top:119px;width:281px;height:182px;background:#232323"></div>
<div class="pl" style="left:743px;top:119px;width:281px"></div>
<div class="ph" style="left:743px;top:120px;width:281px"></div>
<svg class="a" style="left:998.5px;top:122.3px" width="24" height="11" viewBox="0 0 24 11"><path d="M6.500 4.500h-3v4h4.500v-2.500" stroke="#bdbdbd" fill="none" stroke-width=".9"/><path d="M5.800 6.200l3.200-3.200M7 2.500h2.500v2.500" stroke="#bdbdbd" fill="none" stroke-width=".9"/><path d="M16.200 3l5 5M21.200 3l-5 5" stroke="#d8d8d8" stroke-width="1.900"/></svg>
<span class="t " style="left:866px;top:122.6px;font-size:8px;color:#d0d0d0;transform:scaleX(0.884);">Lớp</span>
<span class="t " style="left:747px;top:140.9px;font-size:8.2px;color:#ddd;transform:scaleX(1.049);">Độ trong</span>
<div class="sl" style="left:818px;top:140px;width:164px;height:11.500px"></div>
<span class="t " style="left:987px;top:140.9px;font-size:8.2px;color:#ddd;transform:scaleX(0.989);">100 %</span>
<span class="t " style="left:747px;top:159.2px;font-size:8.2px;color:#ddd;transform:scaleX(1.000);">Pha trộn</span>
<div class="a" style="left:819px;top:157px;width:200px;height:15px;background:#3c3c3c;border-radius:2px"></div>
<span class="t " style="left:821px;top:159.2px;font-size:8.2px;color:#ccc;transform:scaleX(0.935);">Bình thường</span>
<svg class="a" style="left:1009px;top:162.500px" width="7" height="5"><path d="M.5 .5h6l-3 3.500z" fill="#999"/></svg>
<div class="cb" style="left:749.500px;top:180px;width:8.500px;height:8.500px"></div>
<span class="t " style="left:761px;top:179.3px;font-size:8.2px;color:#ddd;transform:scaleX(0.982);">Bảo vệ alpha</span>
<div class="cb" style="left:841.500px;top:180px;width:8.500px;height:8.500px;border-color:#4a4a4a"></div>
<span class="t " style="left:854px;top:179.3px;font-size:8.2px;color:#6e6e6e;transform:scaleX(0.963);">Xén bớt</span>
<div class="cb" style="left:933.700px;top:180px;width:8.500px;height:8.500px"></div>
<span class="t " style="left:946px;top:179.3px;font-size:8.2px;color:#ddd;transform:scaleX(0.966);">Khóa</span>
<div class="a" style="left:744px;top:195px;width:264px;height:78px;background:#4a4847"></div>
<div class="a" style="left:744px;top:195px;width:14.500px;height:28.500px;background:#5c5c5c"></div>
<div class="a" style="left:758.500px;top:195px;width:249px;height:28.500px;background:#529dd8"></div>
<div class="a" style="left:748px;top:205.500px;width:7px;height:7px;border-radius:50%;background:#dcdcdc"></div>
<div class="a" style="left:770px;top:198.500px;width:26.500px;height:21.500px;background:#fff;background-image:linear-gradient(45deg,#f3dcd6 25%,transparent 25%,transparent 75%,#f3dcd6 75%),linear-gradient(45deg,#f3dcd6 25%,transparent 25%,transparent 75%,#f3dcd6 75%);background-size:4px 4px;background-position:0 0,2px 2px"></div>
<div class="a" style="left:774px;top:203px;width:19px;height:11px;border-radius:6px;background:#82e2fa;filter:blur(.7px)"></div>
<span class="t " style="left:809px;top:203.9px;font-size:9.3px;color:#fff;transform:scaleX(0.994);font-weight:bold;">Lớp1</span>
<svg class="a" style="left:990.500px;top:202.500px" width="14" height="14" viewBox="0 0 12 12"><g stroke="#fff" stroke-width="2.300"><path d="M6 .6v10.800M.6 6h10.800M2.200 2.200l7.600 7.600M9.800 2.200l-7.600 7.600"/></g><circle cx="6" cy="6" r="3.700" fill="#fff"/><circle cx="6" cy="6" r="1.500" fill="#529dd8"/></svg>
<div class="a" style="left:1009px;top:203px;width:13px;height:61px;background:linear-gradient(90deg,#585858,#7c7c7c 50%,#5c5c5c);border-radius:6px"></div>
<svg class="a" style="left:1011px;top:196px" width="9" height="6"><path d="M4.500 1l3 4.500h-6z" fill="#a0a0a0"/></svg>
<svg class="a" style="left:1011px;top:266px" width="9" height="6"><path d="M4.500 5l3-4.500h-6z" fill="#a0a0a0"/></svg>
<div class="a" style="left:743px;top:273px;width:281px;height:28px;background:#242424"></div>
<div class="b " style="left:747px;top:276.2px;width:17px;height:17px"><svg viewBox="0 0 17 17"><path d="M4.500 3.500h5.500l2.500 2.500v7.500h-8z" stroke="#e8e8e8" fill="none" stroke-width="1.100"/><path d="M10 3.500v2.500h2.500" stroke="#e8e8e8" fill="none" stroke-width=".9"/></svg></div>
<div class="b " style="left:767.5px;top:276.2px;width:17px;height:17px"><svg viewBox="0 0 17 17"><path d="M4.500 3.500h5.500l2.500 2.500v7.500h-8z" stroke="#dcdcdc" fill="none" stroke-width="1.100"/><text x="8.500" y="12.300" font-size="7" font-weight="bold" fill="#dcdcdc" text-anchor="middle" font-family="Liberation Sans,sans-serif">8</text></svg></div>
<div class="b " style="left:788px;top:276.2px;width:17px;height:17px"><svg viewBox="0 0 17 17"><path d="M4.500 3.500h5.500l2.500 2.500v7.500h-8z" stroke="#dcdcdc" fill="none" stroke-width="1.100"/><text x="8.500" y="12.300" font-size="7" font-weight="bold" fill="#dcdcdc" text-anchor="middle" font-family="Liberation Sans,sans-serif">1</text></svg></div>
<div class="b " style="left:808px;top:276.2px;width:22px;height:17px"><svg viewBox="0 0 22 17"><path d="M3.500 3.500h4.500l2.500 2.500v6.500h-7z" stroke="#ddd" fill="none" stroke-width="1.100"/><path d="M8.500 12.500h5M11 10v5" stroke="#ddd" stroke-width="1.300"/><path d="M15 7.500h5l-2.500 3z" fill="#fff"/></svg></div>
<div class="b " style="left:834px;top:276.2px;width:17px;height:17px"><svg viewBox="0 0 17 17"><path d="M3 5h4l1.200 1.500h5.800v7h-11z" fill="#e4e4e4"/></svg></div>
<div class="sep" style="left:855px;top:280px"></div>
<div class="b " style="left:859px;top:276.2px;width:17px;height:17px"><svg viewBox="0 0 17 17"><rect x="6.500" y="3.500" width="7" height="7" stroke="#c4c4c4" fill="none"/><rect x="3.500" y="6.500" width="7" height="7" stroke="#c4c4c4" fill="#4b4b4b"/></svg></div>
<div class="b dk" style="left:879.5px;top:276.2px;width:17px;height:17px"><svg viewBox="0 0 17 17"><rect x="3.500" y="3.500" width="3.500" height="3.500" fill="none" stroke="#dcdcdc"/><rect x="3.500" y="10" width="3.500" height="3.500" fill="#dcdcdc"/><rect x="10" y="6.500" width="4" height="4" fill="#dcdcdc"/><path d="M7 5.500h2v6h-2M9 8.500h1" stroke="#dcdcdc" fill="none" stroke-width=".8"/></svg></div>
<div class="sep" style="left:900px;top:280px"></div>
<div class="b dk" style="left:905px;top:276.2px;width:17px;height:17px"><svg viewBox="0 0 17 17"><path d="M4.500 6.500h8v7.500h-8z" stroke="#eee" fill="none" stroke-width="1.200"/><path d="M3.500 5h10M6.500 4.500v-1.500h4v1.500" stroke="#eee" fill="none" stroke-width="1.300"/><path d="M7 7v6.500M10 7v6.500" stroke="#eee" stroke-width="1.300"/></svg></div>
<div class="a" style="left:743px;top:301px;width:281px;height:51px;background:#242424"></div>
<div class="pl" style="left:743px;top:301px;width:281px"></div>
<div class="ph" style="left:743px;top:302px;width:281px"></div>
<svg class="a" style="left:998.5px;top:304.3px" width="24" height="11" viewBox="0 0 24 11"><path d="M6.500 4.500h-3v4h4.500v-2.500" stroke="#bdbdbd" fill="none" stroke-width=".9"/><path d="M5.800 6.200l3.200-3.200M7 2.500h2.500v2.500" stroke="#bdbdbd" fill="none" stroke-width=".9"/><path d="M16.200 3l5 5M21.200 3l-5 5" stroke="#d8d8d8" stroke-width="1.900"/></svg>
<span class="t " style="left:855px;top:304.9px;font-size:8px;color:#d0d0d0;transform:scaleX(1.029);">Reference</span>
<div class="b " style="left:746.7px;top:319.9px;width:17px;height:17.5px"><svg viewBox="0 0 17 17"><path d="M4.500 10.500a2.500 2.500 0 0 1 .3-5a3.400 3.400 0 0 1 6.600-.4a2.700 2.700 0 0 1 .6 5.400z" fill="#eee"/><path d="M8.500 8v6M6 11.800l2.500 2.700l2.500-2.700" stroke="#eee" stroke-width="1.500" fill="none"/><path d="M8.500 7.500v3" stroke="#4b4b4b" stroke-width="2.400"/><path d="M8.500 7.500v6" stroke="#eee" stroke-width="1.400"/></svg></div>
<div class="b " style="left:767px;top:319.9px;width:17px;height:17.5px"><svg viewBox="0 0 17 17"><path d="M3 5h4l1.200 1.500h4.800v1.500h-7l-3 5.500z" fill="#ddd"/><path d="M6.300 8.500h8.200l-2.500 5h-8.500z" fill="#ddd" stroke="#4b4b4b" stroke-width=".6"/></svg></div>
<div class="b dk" style="left:787px;top:319.9px;width:17px;height:17.5px"><svg viewBox="0 0 17 17"><path d="M5.500 5.500l6 6M11.500 5.500l-6 6" stroke="#fff" stroke-width="1.600"/></svg></div>
<div class="sep" style="left:808px;top:324px"></div>
<div class="b dk" style="left:812.5px;top:319.9px;width:17px;height:17.5px"><svg viewBox="0 0 17 17"><circle cx="7.500" cy="7.500" r="3.600" stroke="#dcdcdc" fill="none" stroke-width="1.300"/><path d="M10.200 10.200l3.300 3.300" stroke="#dcdcdc" stroke-width="1.800"/><path d="M5.700 7.500h3.600M7.500 5.700v3.600" stroke="#dcdcdc" stroke-width="1"/></svg></div>
<div class="b dk" style="left:833px;top:319.9px;width:17px;height:17.5px"><svg viewBox="0 0 17 17"><rect x="3.500" y="4.500" width="10" height="8" stroke="#dcdcdc" fill="none" stroke-width="1.200"/><path d="M5 8.500v-2.500h2.500M12 8.500v-2.500h-2.500M5 8.500v2.500h2.500M12 8.500v2.500h-2.500" stroke="#dcdcdc" fill="none" stroke-width="1"/></svg></div>
<div class="b dk" style="left:853px;top:319.9px;width:17px;height:17.5px"><svg viewBox="0 0 17 17"><circle cx="7.500" cy="7.500" r="3.600" stroke="#dcdcdc" fill="none" stroke-width="1.300"/><path d="M10.200 10.200l3.300 3.300" stroke="#dcdcdc" stroke-width="1.800"/><path d="M5.700 7.500h3.600" stroke="#dcdcdc" stroke-width="1"/></svg></div>
<div class="sep" style="left:874px;top:324px"></div>
<div class="b dk" style="left:879px;top:319.9px;width:17px;height:17.5px"><svg viewBox="0 0 17 17"><path d="M4 13.500l.8-2.500l5-5.300l1.700 1.700l-5 5.300z" stroke="#fff" stroke-width="1.100" fill="none"/><path d="M9 5l3.300 3.300" stroke="#fff" stroke-width="1.300"/><path d="M10.500 6.500l2-2.300a1.400 1.400 0 0 1 2 2l-2.300 2z" fill="#fff"/></svg></div>
<div class="b on" style="left:899px;top:319.9px;width:17px;height:17.5px"><svg viewBox="0 0 17 17"><g stroke="#eef6fd" stroke-width="1.900" stroke-linecap="round" fill="none"><path d="M6.700 10.200L3.500 8M7 8.200L6 3.600M8.700 7.800L8.500 2.600M10.400 8.200L11 3.600M11.600 9.400L13.200 5.600"/></g><path d="M5.700 8.600L12.400 8.200L12 11.500L11 14.200H7L6.300 12Z" fill="#eef6fd"/></svg></div>
<div class="sep" style="left:920px;top:324px"></div>
<div class="b dk" style="left:924px;top:319.9px;width:17px;height:17.5px"><svg viewBox="0 0 17 17"><path d="M5.300 5a5 5 0 1 1-1.600 4.500" stroke="#dcdcdc" fill="none" stroke-width="1.200"/><path d="M3.200 3.300l.4 3.600l3.400-.9z" fill="#dcdcdc"/><rect x="6.300" y="6.800" width="4.600" height="3.800" transform="rotate(-20 8.600 8.700)" fill="#dcdcdc"/></svg></div>
<div class="b dk" style="left:944px;top:319.9px;width:17px;height:17.5px"><svg viewBox="0 0 17 17"><rect x="5.300" y="5.800" width="6.400" height="5.400" fill="#fff"/><path d="M3.500 4l2 2M13.500 4l-2 2M3.500 13l2-2M13.500 13l-2-2" stroke="#fff" stroke-width="1.200"/></svg></div>
<div class="b dk" style="left:965px;top:319.9px;width:17px;height:17.5px"><svg viewBox="0 0 17 17"><path d="M11.700 5a5 5 0 1 0 1.600 4.500" stroke="#dcdcdc" fill="none" stroke-width="1.200"/><path d="M13.800 3.300l-.4 3.600l-3.400-.9z" fill="#dcdcdc"/><rect x="6.100" y="6.800" width="4.600" height="3.800" transform="rotate(20 8.400 8.700)" fill="#dcdcdc"/></svg></div>
<div class="sep" style="left:986px;top:324px"></div>
<div class="b dk" style="left:990px;top:319.9px;width:17px;height:17.5px"><svg viewBox="0 0 17 17"><rect x="3.500" y="7" width="4" height="6.500" fill="#dcdcdc"/><rect x="10" y="7.500" width="3.500" height="6" fill="none" stroke="#dcdcdc" stroke-width="1"/><path d="M5 6c.5-3 6-3.500 7-.5M12.500 3.500v2.500h-2.500" stroke="#dcdcdc" fill="none" stroke-width="1"/></svg></div>
<div class="a" style="left:743px;top:340.500px;width:281px;height:7.500px;background:repeating-conic-gradient(#e9e9e9 0 25%,#fff 0 50%) 0 0/7.500px 7.500px"></div>
<div class="a" style="left:743px;top:352px;width:281px;height:179px;background:#4a4847"></div>
<div class="pl" style="left:743px;top:352px;width:281px"></div>
<div class="ph" style="left:743px;top:353px;width:281px"></div>
<svg class="a" style="left:998.5px;top:355.3px" width="24" height="11" viewBox="0 0 24 11"><path d="M6.500 4.500h-3v4h4.500v-2.500" stroke="#bdbdbd" fill="none" stroke-width=".9"/><path d="M5.800 6.200l3.200-3.200M7 2.500h2.500v2.500" stroke="#bdbdbd" fill="none" stroke-width=".9"/><path d="M16.200 3l5 5M21.200 3l-5 5" stroke="#d8d8d8" stroke-width="1.900"/></svg>
<span class="t " style="left:853px;top:355.6px;font-size:8px;color:#d0d0d0;transform:scaleX(0.982);">Brush Size</span>
<div class="cell" style="left:743.3px;top:368px;width:29.100px;height:36.400px"></div>
<div class="dot" style="left:757.8px;top:382.2px;width:0.4px;height:0.4px;background:#888"></div>
<span class="t " style="left:756.056px;top:394.2px;font-size:7.6px;color:#eee;transform:scaleX(0.920);">1</span>
<div class="cell" style="left:773.26px;top:368px;width:29.100px;height:36.400px"></div>
<div class="dot" style="left:787.56px;top:382px;width:0.8px;height:0.8px;background:#888"></div>
<span class="t " style="left:783.1px;top:394.2px;font-size:7.6px;color:#eee;transform:scaleX(0.920);">1.5</span>
<div class="cell" style="left:803.22px;top:368px;width:29.100px;height:36.400px"></div>
<div class="dot" style="left:817.32px;top:381.8px;width:1.2px;height:1.2px;background:#bbb"></div>
<span class="t " style="left:815.976px;top:394.2px;font-size:7.6px;color:#eee;transform:scaleX(0.920);">2</span>
<div class="cell" style="left:833.18px;top:368px;width:29.100px;height:36.400px"></div>
<div class="dot" style="left:846.98px;top:381.5px;width:1.8px;height:1.8px;background:#f0f0f0"></div>
<span class="t " style="left:845.936px;top:394.2px;font-size:7.6px;color:#eee;transform:scaleX(0.920);">3</span>
<div class="cell" style="left:863.14px;top:368px;width:29.100px;height:36.400px"></div>
<div class="dot" style="left:876.44px;top:381px;width:2.8px;height:2.8px;background:#f0f0f0"></div>
<span class="t " style="left:875.896px;top:394.2px;font-size:7.6px;color:#eee;transform:scaleX(0.920);">4</span>
<div class="cell" style="left:893.1px;top:368px;width:29.100px;height:36.400px"></div>
<div class="dot" style="left:906.15px;top:380.75px;width:3.3px;height:3.3px;background:#f0f0f0"></div>
<span class="t " style="left:905.856px;top:394.2px;font-size:7.6px;color:#eee;transform:scaleX(0.920);">5</span>
<div class="cell" style="left:923.06px;top:368px;width:29.100px;height:36.400px"></div>
<div class="dot" style="left:935.26px;top:379.9px;width:5px;height:5px;background:#f0f0f0"></div>
<span class="t " style="left:935.816px;top:394.2px;font-size:7.6px;color:#eee;transform:scaleX(0.920);">7</span>
<div class="cell" style="left:953.02px;top:368px;width:29.100px;height:36.400px"></div>
<div class="dot" style="left:963.97px;top:378.65px;width:7.5px;height:7.5px;background:#f0f0f0"></div>
<span class="t " style="left:963.831px;top:394.2px;font-size:7.6px;color:#eee;transform:scaleX(0.920);">10</span>
<div class="cell" style="left:743.3px;top:405.4px;width:29.100px;height:36.400px"></div>
<div class="dot" style="left:753.5px;top:415.3px;width:9px;height:9px;background:#f0f0f0"></div>
<span class="t " style="left:754.111px;top:431.6px;font-size:7.6px;color:#eee;transform:scaleX(0.920);">12</span>
<div class="cell" style="left:773.26px;top:405.4px;width:29.100px;height:36.400px"></div>
<div class="dot" style="left:782.46px;top:414.3px;width:11px;height:11px;background:#f0f0f0"></div>
<span class="t " style="left:784.071px;top:431.6px;font-size:7.6px;color:#eee;transform:scaleX(0.920);">15</span>
<div class="cell" style="left:803.22px;top:405.4px;width:29.100px;height:36.400px"></div>
<div class="dot" style="left:810.42px;top:412.3px;width:15px;height:15px;background:#f0f0f0"></div>
<span class="t " style="left:814.031px;top:431.6px;font-size:7.6px;color:#eee;transform:scaleX(0.920);">20</span>
<div class="cell" style="left:833.18px;top:405.4px;width:29.100px;height:36.400px"></div>
<div class="dot" style="left:838.88px;top:410.8px;width:18px;height:18px;background:#f0f0f0"></div>
<span class="t " style="left:843.991px;top:431.6px;font-size:7.6px;color:#eee;transform:scaleX(0.920);">25</span>
<div class="cell" style="left:863.14px;top:405.4px;width:29.100px;height:36.400px"></div>
<div class="dot" style="left:868.84px;top:410.8px;width:18px;height:18px;background:#f0f0f0"></div>
<span class="t " style="left:873.951px;top:431.6px;font-size:7.6px;color:#eee;transform:scaleX(0.920);">30</span>
<div class="cell" style="left:893.1px;top:405.4px;width:29.100px;height:36.400px"></div>
<div class="dot" style="left:898.8px;top:410.8px;width:18px;height:18px;background:#f0f0f0"></div>
<span class="t " style="left:903.911px;top:431.6px;font-size:7.6px;color:#eee;transform:scaleX(0.920);">40</span>
<div class="cell" style="left:923.06px;top:405.4px;width:29.100px;height:36.400px"></div>
<div class="dot" style="left:928.76px;top:410.8px;width:18px;height:18px;background:#f0f0f0"></div>
<span class="t " style="left:933.871px;top:431.6px;font-size:7.6px;color:#eee;transform:scaleX(0.920);">50</span>
<div class="cell" style="left:953.02px;top:405.4px;width:29.100px;height:36.400px"></div>
<div class="dot" style="left:958.72px;top:410.8px;width:18px;height:18px;background:#f0f0f0"></div>
<span class="t " style="left:963.831px;top:431.6px;font-size:7.6px;color:#eee;transform:scaleX(0.920);">70</span>
<div class="cell" style="left:743.3px;top:442.8px;width:29.100px;height:36.400px"></div>
<div class="dot" style="left:749px;top:448.2px;width:18px;height:18px;background:#f0f0f0"></div>
<span class="t " style="left:752.167px;top:469px;font-size:7.6px;color:#eee;transform:scaleX(0.920);">100</span>
<div class="cell" style="left:773.26px;top:442.8px;width:29.100px;height:36.400px"></div>
<div class="dot" style="left:778.96px;top:448.2px;width:18px;height:18px;background:#f0f0f0"></div>
<span class="t " style="left:782.127px;top:469px;font-size:7.6px;color:#eee;transform:scaleX(0.920);">150</span>
<div class="cell" style="left:803.22px;top:442.8px;width:29.100px;height:36.400px"></div>
<div class="dot" style="left:808.92px;top:448.2px;width:18px;height:18px;background:#f0f0f0"></div>
<span class="t " style="left:812.087px;top:469px;font-size:7.6px;color:#eee;transform:scaleX(0.920);">200</span>
<div class="cell" style="left:833.18px;top:442.8px;width:29.100px;height:36.400px"></div>
<div class="dot" style="left:838.88px;top:448.2px;width:18px;height:18px;background:#f0f0f0"></div>
<span class="t " style="left:842.047px;top:469px;font-size:7.6px;color:#eee;transform:scaleX(0.920);">300</span>
<div class="cell" style="left:863.14px;top:442.8px;width:29.100px;height:36.400px"></div>
<div class="dot" style="left:868.84px;top:448.2px;width:18px;height:18px;background:#f0f0f0"></div>
<span class="t " style="left:872.007px;top:469px;font-size:7.6px;color:#eee;transform:scaleX(0.920);">400</span>
<div class="cell" style="left:893.1px;top:442.8px;width:29.100px;height:36.400px"></div>
<div class="dot" style="left:898.8px;top:448.2px;width:18px;height:18px;background:#f0f0f0"></div>
<span class="t " style="left:901.967px;top:469px;font-size:7.6px;color:#eee;transform:scaleX(0.920);">500</span>
<div class="cell" style="left:923.06px;top:442.8px;width:29.100px;height:36.400px"></div>
<div class="dot" style="left:928.76px;top:448.2px;width:18px;height:18px;background:#f0f0f0"></div>
<span class="t " style="left:931.927px;top:469px;font-size:7.6px;color:#eee;transform:scaleX(0.920);">700</span>
<div class="cell" style="left:953.02px;top:442.8px;width:29.100px;height:36.400px"></div>
<div class="dot" style="left:958.72px;top:448.2px;width:18px;height:18px;background:#f0f0f0"></div>
<span class="t " style="left:959.942px;top:469px;font-size:7.6px;color:#eee;transform:scaleX(0.920);">1000</span>
<div class="a" style="left:1009px;top:368px;width:15px;height:163px;background:#3a3a3a"></div>
<div class="a" style="left:1010px;top:376px;width:13px;height:146px;background:linear-gradient(90deg,#5a5a5a,#808080 50%,#5e5e5e);border-radius:6px"></div>
<svg class="a" style="left:1012px;top:369px" width="9" height="6"><path d="M4.500 1l3 4.500h-6z" fill="#a0a0a0"/></svg>
<svg class="a" style="left:1012px;top:524px" width="9" height="6"><path d="M4.500 5l3-4.500h-6z" fill="#a0a0a0"/></svg>
<div class="a" style="left:0;top:531px;width:1024px;height:15px;background:#242424"></div>
<span class="t " style="left:5px;top:534.8px;font-size:8.2px;color:#ddd;transform:scaleX(1.026);">1400 * 1200 pixel</span>
<span class="t " style="left:77px;top:534.8px;font-size:8.2px;color:#ddd;transform:scaleX(1.023);">(5.9 * 5.1cm)</span>
<span class="t " style="left:132px;top:534.8px;font-size:8.2px;color:#ddd;transform:scaleX(1.078);">600 dpi</span>
<span class="t " style="left:168px;top:534.8px;font-size:8.2px;color:#ddd;transform:scaleX(1.017);">50 %</span>
<span class="t " style="left:194px;top:534.8px;font-size:8.2px;color:#ddd;transform:scaleX(0.989);">( 332, 1301 )</span>
<span class="t " style="left:246px;top:534.8px;font-size:8.2px;color:#ddd;transform:scaleX(1.088);">Vẽ một đường thẳng bằng cách giữ phím Shift, Thay đổi cỡ cọ bằng cách giữ phím Ctrl, Alt và kéo</span>
<div class="a" style="left:0;top:546px;width:1024px;height:30px;background:linear-gradient(90deg,#ebe9e6 0%,#ece8e6 18%,#f1dfe2 27%,#ece3ea 36%,#efe0e2 45%,#eae3ec 60%,#ecdfe6 70%,#f0dfe0 78%,#efe6e4 88%,#ebe9e6 100%)"></div>
<div class="a" style="left:148px;top:546px;width:36px;height:30px;background:rgba(255,255,255,.55)"></div>
<div class="a" style="left:115px;top:574px;width:30px;height:2px;background:#2296b8"></div>
<div class="a" style="left:148px;top:574px;width:36px;height:2px;background:#2296b8"></div>
<svg class="a" style="left:12px;top:555px" width="13" height="13" viewBox="0 0 13 13"><path d="M0 1.800l5.300-.8v5.100h-5.300zM6.100.9l6.900-.9v6.100h-6.900zM0 6.900h5.300v5.100l-5.300-.8zM6.100 6.900h6.900v6.100l-6.900-.9z" fill="#111"/></svg>
<svg class="a" style="left:46.500px;top:551.500px" width="19" height="19" viewBox="0 0 20 20"><defs><linearGradient id="eg" x1=".9" y1="0" x2=".1" y2="1"><stop offset="0" stop-color="#4fd07a"/><stop offset=".35" stop-color="#28a8d8"/><stop offset="1" stop-color="#1455b4"/></linearGradient></defs><circle cx="10" cy="10" r="9" fill="url(#eg)"/><path d="M19 9.500c0 2.800-2.300 4.300-5 4.300c-2.600 0-4-1.300-3.700-2.800c.3-1.300 1.500-1.400 1.500-2.700c0-1.200-1.300-2.300-3-2.300c-3.400 0-6 3-6 6.500c0-.5-1.800-1.300-1.800-2.500c0-5 4-9 9-9s9 3.500 9 8.500z" fill="#fff" fill-opacity="0"/><path d="M7.600 11.500c0-2.300 1.800-3.800 4-3.800c2 0 3.600 1.200 3.600 3c0 1.400-1.200 2.300-2.700 2.300c-1 0-1.500-.4-1.300-1c.2-.5.700-.7.700-1.500c0-.9-.9-1.500-1.900-1.500c-1.500 0-2.400 1.200-2.400 2.500z" fill="#ece8e6"/><path d="M11.200 12.500c-.3.800.3 1.700 1.800 1.700c2.500 0 4.700-1.700 5.800-3.500c-.3 4.500-4 8.300-8.800 8.300c-3-1.800-4-5.500-2.400-7.500c0 3.500 2.400 5.600 5 5.600c1.500 0 2.600-.4 3.400-1c-2 .3-4.500-1-4.800-3.600z" fill="#1a64c0"/></svg>
<svg class="a" style="left:84px;top:552px" width="18" height="17" viewBox="0 0 18 17"><path d="M0 2h6l1.500 2h10.500v10h-18z" fill="#e9a520"/><path d="M0 5h18v10h-18z" fill="#f8d264"/><path d="M4.500 9.500h9v5.500h-9z" fill="#3b8cd8"/><path d="M6.500 12h5v3h-5z" fill="#f8d264"/></svg>
<svg class="a" style="left:121px;top:552px" width="18" height="18" viewBox="0 0 18 18"><circle cx="8.500" cy="9.500" r="7.500" fill="#7dbb3a"/><circle cx="8.500" cy="10" r="4" fill="none" stroke="#fff" stroke-width="2"/><path d="M10.500 6l3-5M12.500 8l4.500-3" stroke="#fff" stroke-width="1.800"/><path d="M12 5.500l2-3M13.500 7.500l3-2" stroke="#3aa04a" stroke-width="1"/></svg>
<svg class="a" style="left:159px;top:552px" width="17" height="17" viewBox="0 0 17 17"><defs><linearGradient id="mg" x1="0" y1="0" x2="1" y2="1"><stop offset="0" stop-color="#2db4d2"/><stop offset="1" stop-color="#1b86c4"/></linearGradient></defs><path d="M8 3.500C11 3 13 1.500 14 .8C14.800 4 15.500 6.500 14.500 10A6.300 6.300 0 1 1 8 3.500Z" fill="url(#mg)"/><path d="M2 10.500a6.300 6.300 0 0 0 8.500 5.500c-3-1-5-3-5.500-6.500z" fill="#3fb54f"/><path d="M9 3.300C11.500 3 13 1.800 14 .8C14.800 4 15.400 6.500 14.600 9.500C13 7 11 5 9 3.300Z" fill="#e8432c"/><path d="M8.500 4.500c2 1.500 3.500 3.300 4.300 5.500c-2.300.5-4.300-.5-5.300-2.500c-.3-1 0-2.200 1-3z" fill="#f5f1ee"/><path d="M7 4.200c1 0 2 .3 2.800.9c-1.200.8-1.600 2-1.500 3c-1.500-.5-2.300-2.200-1.300-3.900z" fill="#f2a43a"/></svg>
<svg class="a" style="left:790px;top:555px" width="100" height="14" viewBox="790 555 100 14"><path d="M791.500 563l4-4l4 4" stroke="#1a1a1a" fill="none" stroke-width="1.100"/><rect x="816.500" y="558.500" width="8" height="5" stroke="#1a1a1a" fill="none"/><path d="M818 560h3.500v2.500h-3.500z" fill="#1a1a1a"/><path d="M813.500 557.500l3 2.500M813.500 557.500v3" stroke="#1a1a1a" stroke-width="1"/><path d="M840.500 566a8.500 8.500 0 0 1 8.500-8.500M842.800 566a6.200 6.200 0 0 1 6.200-6.200M845 566a4 4 0 0 1 4-4M847.200 566a1.800 1.800 0 0 1 1.800-1.800" stroke="#555" fill="none" stroke-width="1"/><path d="M862 559.500h2l3-2.500v9l-3-2.500h-2z" stroke="#1a1a1a" fill="none" stroke-width="1"/><path d="M869 559.500a3.500 3.500 0 0 1 0 5M871 558a5.500 5.500 0 0 1 0 8" stroke="#555" fill="none" stroke-width="1"/></svg>
<svg class="a" style="left:887px;top:553px" width="16" height="16" viewBox="0 0 16 16"><path d="M2 12a2 2 0 1 0 3 0c0-3 4-6 6.500-9.500c.8-1.200 2.200-.2 1.500 1c-2 3.500-4 5-6.500 6.500c1.500 1.500 4 1 6.500-1" stroke="#1a1a1a" fill="none" stroke-width="1.200"/></svg>
<span class="t " style="left:914px;top:555.1px;font-size:8.5px;color:#1a1a1a;transform:scaleX(0.923);">ENG</span>
<span class="t " style="left:944.5px;top:548.4px;font-size:8.5px;color:#1a1a1a;transform:scaleX(1.015);">5:11 PM</span>
<span class="t " style="left:943px;top:562.1px;font-size:8.5px;color:#1a1a1a;transform:scaleX(1.028);">8/7/2021</span>
<svg class="a" style="left:992px;top:554px" width="20" height="19" viewBox="0 0 20 19"><path d="M1 1h12v9h-7l-2.500 2.500v-2.500h-2.500z" fill="#1a1a1a"/><path d="M3 3.500h8M3 5.500h8M3 7.500h6" stroke="#eee" stroke-width=".8"/><circle cx="12.500" cy="12" r="5" fill="#e8e4e4" stroke="#888" stroke-width=".6"/><text x="12.500" y="14.800" font-size="7.500" font-family="Liberation Sans,sans-serif" font-weight="bold" fill="#1a1a1a" text-anchor="middle">9</text></svg>
<div class="a" style="left:1020px;top:548px;width:1px;height:28px;background:#aaa"></div>
<svg class="a" style="left:0;top:0;pointer-events:none" width="1024" height="576" viewBox="0 0 1024 576"><g fill="none" stroke="#e01822" stroke-width="1.300" stroke-linecap="round"><path d="M122 204C88 197 50 214 44 251C40 288 76 309 108 306C141 301 163 277 162 250C161 221 146 207 112 203"/><path d="M162 257h21M180 252c4 2 6 3 9 5c-3 2-7 4-11 6"/><ellipse cx="39.500" cy="330.500" rx="10" ry="9"/><path d="M73 325c4-4 15-4 18 2c2 6-3 11-9 11c-6 0-10-4-9-9"/><path d="M29 341c10 3 25 3 33 2l3.500 4l3-4c8 0 19-1 24-3"/></g><g fill="#e01822" font-family="DejaVu Sans,Liberation Sans,sans-serif" font-weight="200" stroke="#e01822" stroke-width=".35"><text x="195" y="265" font-size="16" font-style="italic" stroke-width="0" transform="rotate(-9 195 265)" textLength="27" lengthAdjust="spacingAndGlyphs">Vẽ</text><text x="226" y="260" font-size="17" font-style="italic" stroke-width="0" transform="rotate(-6 226 260)" textLength="35" lengthAdjust="spacingAndGlyphs">hoa</text><text x="219" y="285" font-size="20" font-style="italic" stroke-width="0" transform="rotate(-4 219 285)" textLength="38" lengthAdjust="spacing">Lá .</text><text x="40" y="364" font-size="16.500" transform="rotate(-3 40 364)" textLength="23" lengthAdjust="spacingAndGlyphs">Tải</text><text x="45.500" y="376" font-size="12" textLength="13" lengthAdjust="spacingAndGlyphs">cọ</text></g></svg>
</body></html>
